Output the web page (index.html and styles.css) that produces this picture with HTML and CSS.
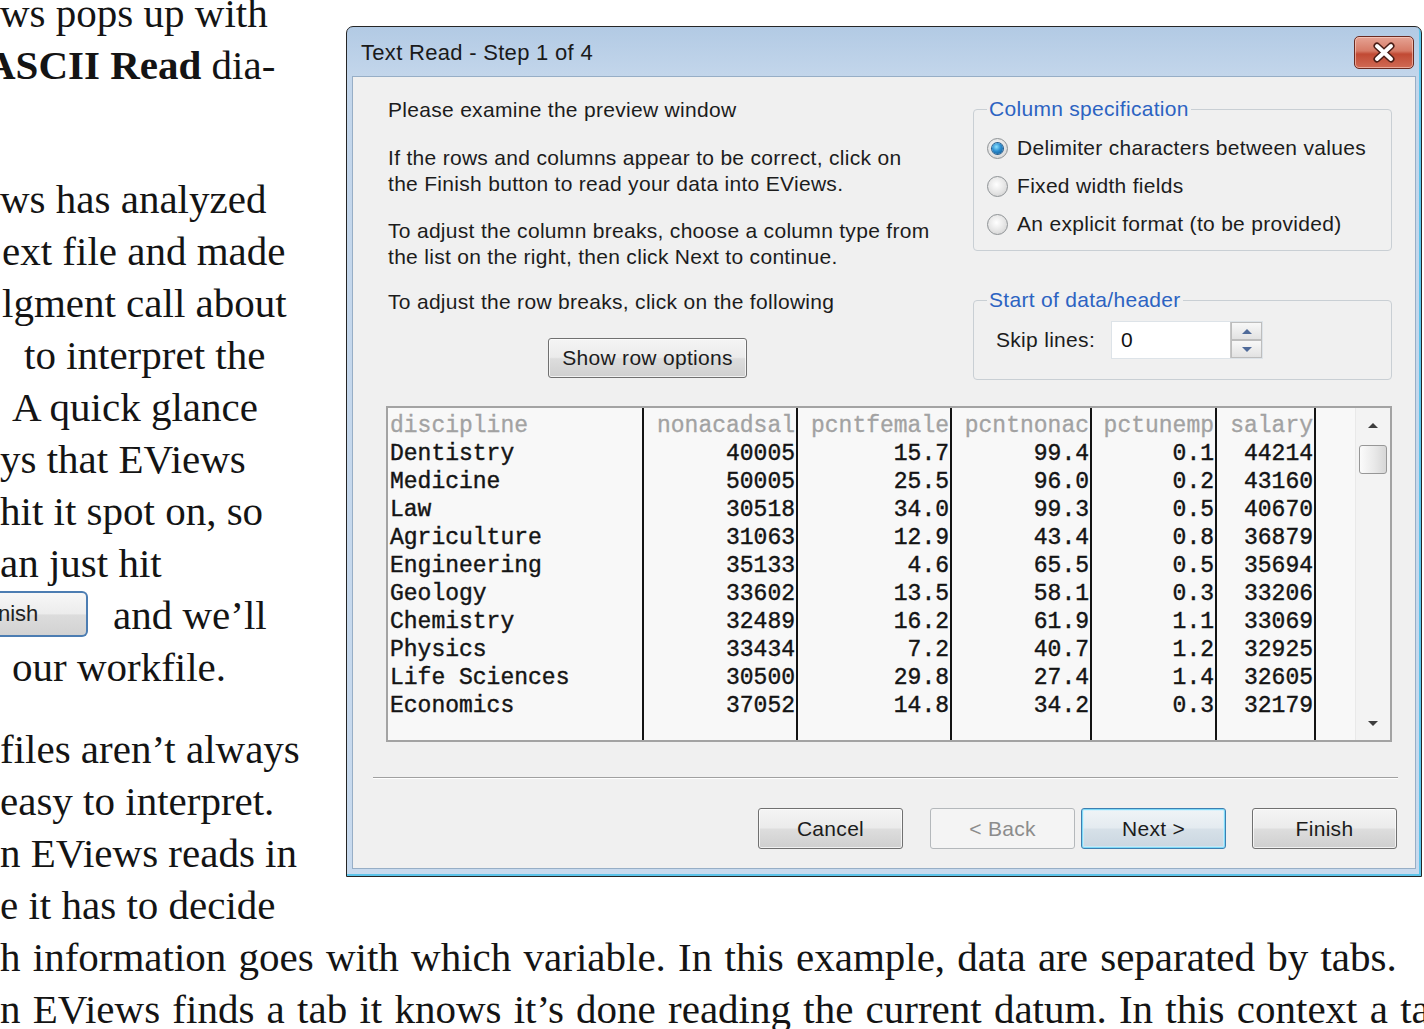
FILE: index.html
```html
<!DOCTYPE html>
<html lang="en">
<head>
<meta charset="utf-8">
<title>Text Read</title>
<link rel="stylesheet" href="styles.css">
</head>
<body>
<div class="page">
  <div class="top">
    <div class="margin-text">
      <div class="para">
        <div class="ln">ws pops up with</div>
        <div class="ln in-neg"><b>ASCII Read</b> dia-</div>
        <div class="ln">&nbsp;</div>
      </div>
      <div class="para">
        <div class="ln">ws has analyzed</div>
        <div class="ln in-2">ext file and made</div>
        <div class="ln in-2">lgment call about</div>
        <div class="ln in-24">to interpret the</div>
        <div class="ln in-12">A quick glance</div>
        <div class="ln">ys that EViews</div>
        <div class="ln">hit it spot on, so</div>
        <div class="ln">an just hit</div>
        <div class="ln"><span class="mini-btn">nish</span><span class="after-btn">and we’ll</span></div>
        <div class="ln in-12">our workfile.</div>
      </div>
      <div class="para">
        <div class="ln">files aren’t always</div>
        <div class="ln">easy to interpret.</div>
        <div class="ln">n EViews reads in</div>
        <div class="ln">e it has to decide</div>
      </div>
    </div>

    <div class="dialog">
      <div class="titlebar">
        <span class="title">Text Read - Step 1 of 4</span>
        <span class="close">
          <svg width="60" height="33" viewBox="0 0 60 33">
            <path d="M23 10 L37 23 M37 10 L23 23" stroke="#4a1d16" stroke-width="7" stroke-linecap="round" fill="none"/>
            <path d="M23 10 L37 23 M37 10 L23 23" stroke="#ffffff" stroke-width="4" stroke-linecap="round" fill="none"/>
          </svg>
        </span>
      </div>
      <div class="client">
        <div class="upper">
          <div class="instr">
            <p>Please examine the preview window</p>
            <p>If the rows and columns appear to be correct, click on<br>the Finish button to read your data into EViews.</p>
            <p>To adjust the column breaks, choose a column type from<br>the list on the right, then click Next to continue.</p>
            <p>To adjust the row breaks, click on the following</p>
            <div class="btn rowopt">Show row options</div>
          </div>
          <div class="groups">
            <fieldset class="grp colspec">
              <legend>Column specification</legend>
              <div class="radio-row"><span class="radio on"></span>Delimiter characters between values</div>
              <div class="radio-row"><span class="radio"></span>Fixed width fields</div>
              <div class="radio-row"><span class="radio"></span>An explicit format (to be provided)</div>
            </fieldset>
            <fieldset class="grp startgrp">
              <legend>Start of data/header</legend>
              <div class="skip">
                <span class="skip-label">Skip lines:</span>
                <div class="spin">
                  <span class="spin-val">0</span>
                  <span class="spin-btns">
                    <span class="spin-b"><span class="tri-up small"></span></span>
                    <span class="spin-b"><span class="tri-down small"></span></span>
                  </span>
                </div>
              </div>
            </fieldset>
          </div>
        </div>

        <div class="preview">
          <div class="col c1">
            <div class="cell h">discipline</div>
            <div class="cell">Dentistry</div>
            <div class="cell">Medicine</div>
            <div class="cell">Law</div>
            <div class="cell">Agriculture</div>
            <div class="cell">Engineering</div>
            <div class="cell">Geology</div>
            <div class="cell">Chemistry</div>
            <div class="cell">Physics</div>
            <div class="cell">Life Sciences</div>
            <div class="cell">Economics</div>
          </div>
          <div class="col c2">
            <div class="cell h">nonacadsal</div>
            <div class="cell">40005</div>
            <div class="cell">50005</div>
            <div class="cell">30518</div>
            <div class="cell">31063</div>
            <div class="cell">35133</div>
            <div class="cell">33602</div>
            <div class="cell">32489</div>
            <div class="cell">33434</div>
            <div class="cell">30500</div>
            <div class="cell">37052</div>
          </div>
          <div class="col c3">
            <div class="cell h">pcntfemale</div>
            <div class="cell">15.7</div>
            <div class="cell">25.5</div>
            <div class="cell">34.0</div>
            <div class="cell">12.9</div>
            <div class="cell">4.6</div>
            <div class="cell">13.5</div>
            <div class="cell">16.2</div>
            <div class="cell">7.2</div>
            <div class="cell">29.8</div>
            <div class="cell">14.8</div>
          </div>
          <div class="col c4">
            <div class="cell h">pcntnonac</div>
            <div class="cell">99.4</div>
            <div class="cell">96.0</div>
            <div class="cell">99.3</div>
            <div class="cell">43.4</div>
            <div class="cell">65.5</div>
            <div class="cell">58.1</div>
            <div class="cell">61.9</div>
            <div class="cell">40.7</div>
            <div class="cell">27.4</div>
            <div class="cell">34.2</div>
          </div>
          <div class="col c5">
            <div class="cell h">pctunemp</div>
            <div class="cell">0.1</div>
            <div class="cell">0.2</div>
            <div class="cell">0.5</div>
            <div class="cell">0.8</div>
            <div class="cell">0.5</div>
            <div class="cell">0.3</div>
            <div class="cell">1.1</div>
            <div class="cell">1.2</div>
            <div class="cell">1.4</div>
            <div class="cell">0.3</div>
          </div>
          <div class="col c6">
            <div class="cell h">salary</div>
            <div class="cell">44214</div>
            <div class="cell">43160</div>
            <div class="cell">40670</div>
            <div class="cell">36879</div>
            <div class="cell">35694</div>
            <div class="cell">33206</div>
            <div class="cell">33069</div>
            <div class="cell">32925</div>
            <div class="cell">32605</div>
            <div class="cell">32179</div>
          </div>
          <div class="vscroll">
            <div class="sb-arrow"><span class="tri-up"></span></div>
            <div class="sb-thumb"></div>
            <div class="sb-track"></div>
            <div class="sb-arrow"><span class="tri-down"></span></div>
          </div>
        </div>

        <div class="sep"></div>

        <div class="buttons">
          <div class="btn b-cancel">Cancel</div>
          <div class="btn b-back disabled">&lt; Back</div>
          <div class="btn b-next default">Next &gt;</div>
          <div class="btn b-finish">Finish</div>
        </div>
      </div>
    </div>
  </div>

  <div class="wide">
    <div class="ln">h information goes with which variable. In this example, data are separated by tabs.</div>
    <div class="ln">n EViews finds a tab it knows it’s done reading the current datum. In this context a tab</div>
  </div>
</div>
</body>
</html>
```

FILE: styles.css
```css
* { box-sizing: border-box; }

html, body {
  margin: 0;
  padding: 0;
}

body {
  width: 1424px;
  height: 1029px;
  overflow: hidden;
  background: #ffffff;
  color: #141414;
  font-family: "Liberation Serif", "Times New Roman", serif;
}

.page {
  margin-top: -13px;
}

.top {
  display: flex;
  align-items: flex-start;
}

/* ---------- book text ---------- */
.margin-text {
  flex: none;
  width: 346px;
  overflow: hidden;
  font-size: 41px;
  white-space: nowrap;
}

.para + .para {
  margin-top: 30px;
}

.ln {
  height: 52px;
  line-height: 52px;
}

.in-neg { margin-left: -14px; }
.in-2 { padding-left: 2px; }
.in-12 { padding-left: 12px; }
.in-24 { padding-left: 24px; }

.mini-btn {
  display: inline-block;
  vertical-align: top;
  margin-top: 2px;
  width: 88px;
  height: 46px;
  line-height: 42px;
  border: 2px solid #4c7db2;
  border-left: none;
  border-radius: 0 6px 6px 0;
  background: linear-gradient(#f7f7f7, #ececec 50%, #dcdcdc 52%, #d2d2d2);
  font-family: "Liberation Sans", Arial, sans-serif;
  font-size: 22px;
  color: #222;
  text-indent: -2px;
}

.after-btn {
  margin-left: 25px;
}

.wide {
  font-size: 41px;
  word-spacing: 2px;
  white-space: nowrap;
}

/* ---------- dialog frame ---------- */
.dialog {
  flex: none;
  width: 1076px;
  margin-top: 39px;
  border: 1px solid #262626;
  border-radius: 7px 7px 0 0;
  padding: 0 5px 7px;
  background: linear-gradient(#b2cae4, #c3d6eb 49px, #c8daee);
  box-shadow: inset -2px -2px 0 #5cc4ea;
  font-family: "Liberation Sans", Arial, sans-serif;
  color: #1c1c1c;
}

.titlebar {
  height: 49px;
  display: flex;
  align-items: flex-start;
  justify-content: space-between;
  padding-left: 9px;
}

.title {
  font-size: 22px;
  letter-spacing: 0.3px;
  line-height: 51px;
  color: #1a1a1a;
}

.close {
  width: 60px;
  height: 33px;
  margin-top: 9px;
  margin-right: 2px;
  border: 1px solid #6a2a20;
  border-radius: 5px;
  background: linear-gradient(#e6a394, #d67a66 45%, #c14a34 55%, #d06a54);
  box-shadow: inset 0 0 0 1px rgba(255, 220, 210, 0.55);
}

.close svg {
  display: block;
  margin: -1px 0 0 -1px;
}

.client {
  background: #f0f0f0;
  border: 1px solid #97aec6;
  padding: 20px 23px 19px 33px;
  font-size: 21px;
  letter-spacing: 0.3px;
}

/* ---------- upper area ---------- */
.upper {
  display: flex;
  justify-content: space-between;
  align-items: flex-start;
}

.instr {
  padding-left: 2px;
}

.instr p {
  margin: 0;
  line-height: 26px;
}

.instr p + p {
  margin-top: 22px;
}

.instr p:nth-child(3) { margin-top: 21px; }
.instr p:nth-child(4) { margin-top: 19px; }

.groups {
  width: 419px;
}

.grp {
  margin: 0;
  min-width: 0;
  border: 1px solid #c9cfd4;
  border-radius: 4px;
}

.grp legend {
  padding: 0 2px;
  line-height: 24px;
  color: #2c63c2;
}

.colspec {
  padding: 8px 10px 7px 13px;
}

.radio-row {
  height: 38px;
  display: flex;
  align-items: center;
  white-space: nowrap;
}

.radio {
  flex: none;
  width: 21px;
  height: 21px;
  margin-right: 9px;
  border-radius: 50%;
  border: 1px solid #8f9396;
  background: radial-gradient(circle at 45% 40%, #ffffff, #e4e4e4 55%, #c9c9c9);
  display: flex;
  align-items: center;
  justify-content: center;
}

.radio.on::after {
  content: "";
  width: 11px;
  height: 11px;
  border-radius: 50%;
  background: radial-gradient(circle at 40% 35%, #8fe3ff, #2a8ccf 45%, #0f4d86);
  box-shadow: 0 0 0 1px #245c8c;
}

.startgrp {
  margin-top: 37px;
  padding: 9px 10px 20px 13px;
}

.skip {
  display: flex;
  align-items: center;
  padding-left: 9px;
}

.skip-label {
  width: 115px;
}

.spin {
  display: flex;
  height: 38px;
  width: 152px;
  border: 1px solid #dde3e8;
  background: #ffffff;
}

.spin-val {
  flex: 1;
  line-height: 36px;
  padding-left: 9px;
  color: #111;
}

.spin-btns {
  width: 32px;
  display: flex;
  flex-direction: column;
  border-left: 1px solid #c6c6c6;
}

.spin-b {
  flex: 1;
  display: flex;
  align-items: center;
  justify-content: center;
  border: 1px solid #bdbdbd;
  background: linear-gradient(#f8f8f8, #e2e2e2);
}

.tri-up {
  width: 0;
  height: 0;
  border-left: 5px solid transparent;
  border-right: 5px solid transparent;
  border-bottom: 5px solid #3d3d3d;
}

.tri-down {
  width: 0;
  height: 0;
  border-left: 5px solid transparent;
  border-right: 5px solid transparent;
  border-top: 5px solid #3d3d3d;
}

.tri-up.small { border-bottom-color: #4f6a99; }
.tri-down.small { border-top-color: #4f6a99; }

/* ---------- buttons ---------- */
.btn {
  display: flex;
  align-items: center;
  justify-content: center;
  width: 145px;
  height: 41px;
  border: 1px solid #707070;
  border-radius: 3px;
  background: linear-gradient(#f4f4f4, #ebebeb 48%, #dddddd 52%, #cfcfcf);
  box-shadow: inset 0 0 0 1px rgba(255, 255, 255, 0.7);
  font-size: 21px;
  color: #1c1c1c;
  white-space: nowrap;
}

.rowopt {
  width: 199px;
  height: 40px;
  margin-top: 23px;
  margin-left: 160px;
}

.btn.disabled {
  border-color: #b4b8bb;
  background: #f4f4f4;
  color: #8c8c8c;
  box-shadow: none;
}

.btn.default {
  border-color: #3c7fb1;
  background: linear-gradient(#f0f4f7, #e4ebf0 48%, #d6e0e8 52%, #cad6e0);
  box-shadow: inset 0 0 0 1px #7fdaf8, inset 0 0 0 2px rgba(200, 240, 255, 0.6);
}

.buttons {
  display: flex;
  justify-content: flex-end;
  margin-top: 29px;
  margin-right: -5px;
}

.b-cancel { margin-right: 27px; }
.b-back { margin-right: 6px; }
.b-next { margin-right: 26px; }

/* ---------- preview grid ---------- */
.preview {
  display: flex;
  margin-top: 26px;
  height: 336px;
  border: 2px solid #a3a3a3;
  background: #f8f8f8;
}

.col {
  flex: none;
  height: 100%;
  padding-top: 4px;
  border-right: 2px solid #141414;
  overflow: hidden;
}

.c1 { width: 256px; }
.c2 { width: 154px; }
.c3 { width: 154px; }
.c4 { width: 140px; }
.c5 { width: 125px; }
.c6 { width: 99px; }

.cell {
  height: 28px;
  line-height: 28px;
  font-family: "Liberation Mono", "Courier New", monospace;
  font-size: 23px;
  letter-spacing: 0;
  color: #141414;
  white-space: nowrap;
  text-align: right;
  padding-right: 1px;
  -webkit-text-stroke: 0.4px #141414;
}

.c1 .cell {
  text-align: left;
  padding-left: 2px;
  padding-right: 0;
}

.cell.h {
  color: #a2a2a2;
  -webkit-text-stroke: 0.3px #a2a2a2;
}

.vscroll {
  margin-left: auto;
  width: 35px;
  height: 100%;
  display: flex;
  flex-direction: column;
  align-items: center;
  background: #f3f3f3;
  border-left: 1px solid #e9e9e9;
}

.sb-arrow {
  height: 34px;
  width: 100%;
  display: flex;
  align-items: center;
  justify-content: center;
}

.sb-thumb {
  margin-top: 3px;
  width: 28px;
  height: 29px;
  border: 1px solid #979797;
  border-radius: 3px;
  background: linear-gradient(90deg, #fbfbfb, #e9e9e9 55%, #d6d6d6);
}

.sb-track {
  flex: 1;
}

/* ---------- separator ---------- */
.sep {
  margin: 35px -6px 0 -13px;
  height: 2px;
  border-top: 1px solid #a0a0a0;
  border-bottom: 1px solid #ffffff;
}
```
